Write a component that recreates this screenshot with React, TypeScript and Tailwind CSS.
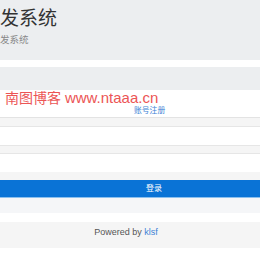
import React from 'react';

const FONT = "font-['Liberation_Sans','Noto_Sans_CJK_SC',sans-serif]";

const App: React.FC = () => {
    return (
        <div className={`w-[260px] h-[260px] overflow-hidden bg-white ${FONT}`}>
            {/* Header */}
            <div className="h-[60px] bg-[#eceef0] pt-[8px]">
                <div className="text-[19px] leading-[22px] text-[#333]">发系统</div>
                <div className="mt-[4px] text-[9.5px] leading-[12px] text-[#888]">发系统</div>
            </div>
            <div className="h-[7px]" />
            <div className="h-[23px] bg-[#eceef0]" />

            {/* Watermark row + register link */}
            <div className="h-[28px] border-b border-[#e3e3e3] flex flex-col">
                <div className="pl-[5px] text-[14px] leading-[16px] text-[#ec5555] whitespace-nowrap">
                    南图博客 <span className="text-[15px]">www.ntaaa.cn</span>
                </div>
                <a className="ml-[134px] text-[7.8px] leading-[10px] text-[#3b82d6]">账号注册</a>
            </div>

            <div className="h-[9px] bg-[#f5f5f5] border-b border-[#e6e6e6]" />
            <div className="h-[18px]" />
            <div className="h-[9px] bg-[#f5f5f5] border-y border-[#e6e6e6]" />
            <div className="h-[18px]" />
            <div className="h-[8px] bg-[#f5f5f5]" />

            {/* Login button */}
            <button className="w-full h-[18px] bg-[#0a73d6] border-b border-[#8cc0ee] flex items-center justify-center pl-[48px] text-[8px] text-white">
                登录
            </button>
            <div className="h-[15px] bg-[#f5f6f8]" />
            <div className="h-[9px]" />

            {/* Footer */}
            <div className="h-[26px] bg-[#f5f5f5] flex items-start justify-center pt-[4px] pr-[8px] text-[9px] leading-[12px] text-[#555]">
                Powered by&nbsp;<span className="text-[#3b82d6]">klsf</span>
            </div>
        </div>
    );
};

export default App;
